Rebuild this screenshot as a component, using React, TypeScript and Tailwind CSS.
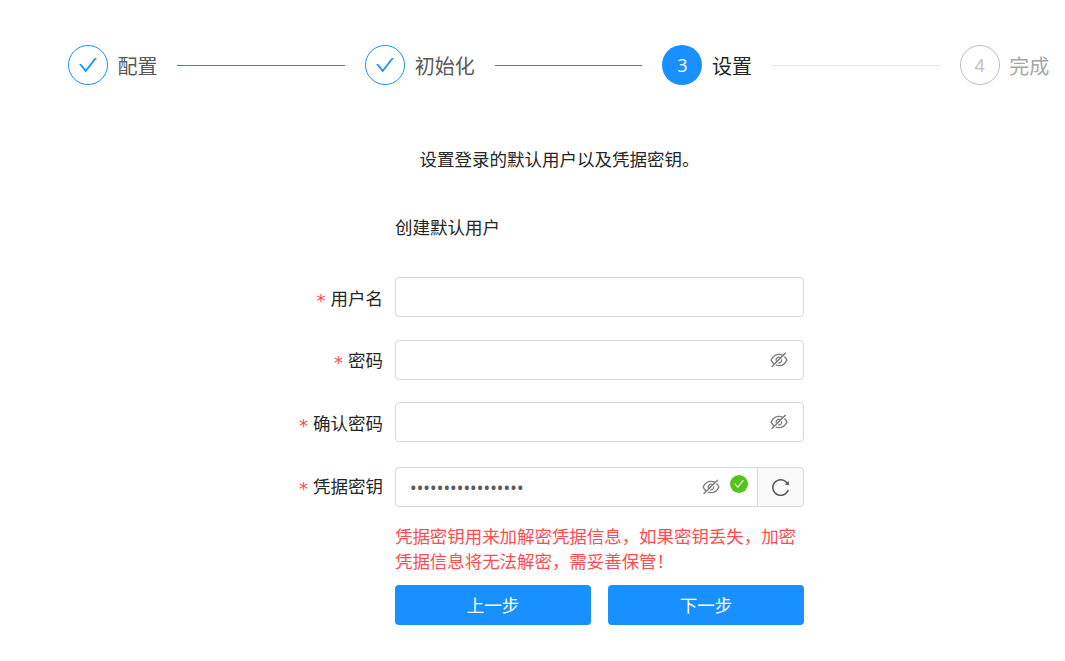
const CHECK =
  "M912 190h-69.9c-9.8 0-19.1 4.5-25.1 12.2L404.7 724.5 207 474a32 32 0 00-25.1-12.2H112c-6.7 0-10.4 7.7-6.3 12.9l273.9 347c12.8 16.2 37.4 16.2 50.3 0l488.4-618.9c4.1-5.1.4-12.8-6.3-12.8z";

function CheckIcon({ className }: { className: string }) {
  return (
    <svg viewBox="0 0 1024 1024" fill="currentColor" className={className}>
      <path d={CHECK} />
    </svg>
  );
}

function EyeOff({ className = "" }: { className?: string }) {
  return (
    <svg viewBox="0 0 1024 1024" fill="currentColor" className={`w-[20px] h-[20px] text-[#7f7f7f] ${className}`}>
      <path d="M942.2 486.2Q889.47 375.11 816.7 305l-50.88 50.88C807.31 395.53 843.45 447.4 874.7 512 791.5 684.2 673.4 766 512 766q-72.67 0-133.87-22.38L323 798.75Q408 838 512 838q288.3 0 430.2-300.3a60.29 60.29 0 000-51.5zm-63.57-320.64L836 122.88a8 8 0 00-11.32 0L715.31 232.2Q624.86 186 512 186q-288.3 0-430.2 300.3a60.3 60.3 0 000 51.5q56.69 119.4 136.5 191.41L112.48 835a8 8 0 000 11.31L155.17 889a8 8 0 0011.31 0l712.15-712.12a8 8 0 000-11.32zM149.3 512C232.6 339.8 350.7 258 512 258c54.54 0 104.13 9.36 149.12 28.39l-70.3 70.3a176 176 0 00-238.13 238.13l-83.42 83.42C223.1 637.49 183.3 582.28 149.3 512zm246.7 0a112.11 112.11 0 01146.2-106.69L401.31 546.2A112 112 0 01396 512z" />
      <path d="M508 624c-3.46 0-6.87-.16-10.25-.47l-52.82 52.82a176.09 176.09 0 00227.42-227.42l-52.82 52.82c.31 3.38.47 6.79.47 10.25a111.94 111.94 0 01-112 112z" />
    </svg>
  );
}

function Reload() {
  return (
    <svg viewBox="0 0 1024 1024" fill="currentColor" className="w-[21px] h-[21px] text-[#595959]">
      <path d="M909.1 209.3l-56.4 44.1C775.8 155.1 656.2 92 521.9 92 290 92 102.3 279.5 102 511.5 101.7 743.7 289.8 932 521.9 932c181.3 0 335.8-115 394.6-276.1 1.5-4.2-.7-8.9-4.9-10.3l-56.7-19.5a8 8 0 00-10.1 4.8c-1.8 5-3.8 10-5.9 14.9-17.3 41-42.1 77.8-73.7 109.4A344.77 344.77 0 01655.9 829c-42.3 17.9-87.4 27-133.8 27-46.5 0-91.5-9.1-133.8-27A341.5 341.5 0 01279 755.2a342.16 342.16 0 01-73.7-109.4c-17.9-42.4-27-87.4-27-133.9s9.1-91.5 27-133.9c17.3-41 42.1-77.8 73.7-109.4 31.6-31.6 68.4-56.4 109.3-73.8 42.3-17.9 87.4-27 133.8-27 46.5 0 91.5 9.1 133.8 27a341.5 341.5 0 01109.3 73.8c9.9 9.9 19.2 20.4 27.8 31.4l-60.2 47a8 8 0 003 14.1l175.6 43c5 1.2 9.9-2.6 9.9-7.7l.8-180.9c-.1-6.6-7.8-10.3-13-6.2z" />
    </svg>
  );
}

function Step({ title, state, num }: { title: string; state: "done" | "active" | "todo"; num?: number }) {
  return (
    <div className={`flex items-center h-10 ${state === "todo" ? "" : "flex-1"}`}>
      {state === "done" && (
        <div className="w-10 h-10 shrink-0 rounded-full border border-[#1890ff] flex items-center justify-center">
          <CheckIcon className="w-[22px] h-[22px] text-[#1890ff]" />
        </div>
      )}
      {state === "active" && (
        <div className="w-10 h-10 shrink-0 rounded-full bg-[#1890ff] text-white text-[18px] flex items-center justify-center">
          {num}
        </div>
      )}
      {state === "todo" && (
        <div className="w-10 h-10 shrink-0 rounded-full border border-[#bfbfbf] text-[#bfbfbf] text-[18px] flex items-center justify-center">
          {num}
        </div>
      )}
      <span
        className={`ml-[9.6px] h-10 text-[20px] leading-[44px] whitespace-nowrap ${
          state === "done" ? "text-[#595959]" : state === "active" ? "text-[#262626]" : "text-[#a6a6a6]"
        }`}
      >
        {title}
      </span>
      {state !== "todo" && (
        <div className={`flex-1 h-px ml-[19.8px] mr-[20px] ${state === "done" ? "bg-[#1890ff]" : "bg-[#e8e8e8]"}`} />
      )}
    </div>
  );
}

function FormRow({
  label,
  className,
  labelClassName = "",
  children,
}: {
  label: string;
  className: string;
  labelClassName?: string;
  children: React.ReactNode;
}) {
  return (
    <div className={`flex ${className}`}>
      <label className={`w-[383px] h-10 flex items-center justify-end text-[#262626] ${labelClassName}`}>
        <span className="mr-[5px] translate-y-[3px] text-[18px] text-[#ff4d4f] leading-none font-['DejaVu_Sans',sans-serif]">
          *
        </span>
        {label}
      </label>
      <div className="ml-3 w-[409px] h-10">{children}</div>
    </div>
  );
}

function PlainInput({ eye = false }: { eye?: boolean }) {
  return (
    <div className="h-10 rounded border border-[#d9d9d9] bg-white flex items-center justify-end pr-[14px]">
      {eye && <EyeOff />}
    </div>
  );
}

export default function App() {
  return (
    <div className="w-[1065px] h-[661px] bg-white overflow-hidden text-[17.5px] font-['Noto_Sans','Noto_Sans_CJK_SC',sans-serif]">
      <div className="flex pl-[68px] pr-[15.8px] pt-[45px]">
        <Step title="配置" state="done" />
        <Step title="初始化" state="done" />
        <Step title="设置" state="active" num={3} />
        <Step title="完成" state="todo" num={4} />
      </div>

      <p className="mt-[60px] ml-[419.5px] leading-[28px] text-[#262626] whitespace-nowrap">
        设置登录的默认用户以及凭据密钥。
      </p>
      <p className="mt-[40px] ml-[395px] leading-[28px] text-[#262626]">创建默认用户</p>

      <FormRow label="用户名" className="mt-[36px]" labelClassName="pt-[2px]">
        <PlainInput />
      </FormRow>
      <FormRow label="密码" className="mt-[23px]">
        <PlainInput eye />
      </FormRow>
      <FormRow label="确认密码" className="mt-[22px]" labelClassName="pt-[2px]">
        <PlainInput eye />
      </FormRow>
      <FormRow label="凭据密钥" className="mt-[25px]" labelClassName="pb-[2px]">
        <div className="h-10 flex">
          <div className="flex-1 min-w-0 rounded-l border border-[#d9d9d9] flex items-center pl-[14px] pr-[9px]">
            <input
              type="password"
              defaultValue="aaaaaaaaaaaaaaaaa"
              readOnly
              className="flex-1 min-w-0 outline-none text-[#595959] text-[17.5px] tracking-[0.1px]"
            />
            <EyeOff className="mr-[9px]" />
            <span className="w-[18px] h-[18px] -mt-[6px] rounded-full bg-[#52c41a] flex items-center justify-center">
              <CheckIcon className="w-[12px] h-[12px] text-white" />
            </span>
          </div>
          <div className="w-[47px] -ml-px rounded-r border border-[#d9d9d9] bg-[#fafafa] flex items-center justify-center">
            <Reload />
          </div>
        </div>
      </FormRow>

      <div className="ml-[395px] w-[409px] mt-[17px] text-[#ff4d4f] text-[17.45px] leading-[25px]">
        凭据密钥用来加解密凭据信息，如果密钥丢失，加密凭据信息将无法解密，需妥善保管！
      </div>
      <div className="ml-[395px] w-[409px] mt-[11px] flex gap-[17px]">
        <button className="flex-1 h-10 rounded bg-[#1890ff] text-white">上一步</button>
        <button className="flex-1 h-10 rounded bg-[#1890ff] text-white">下一步</button>
      </div>
    </div>
  );
}
